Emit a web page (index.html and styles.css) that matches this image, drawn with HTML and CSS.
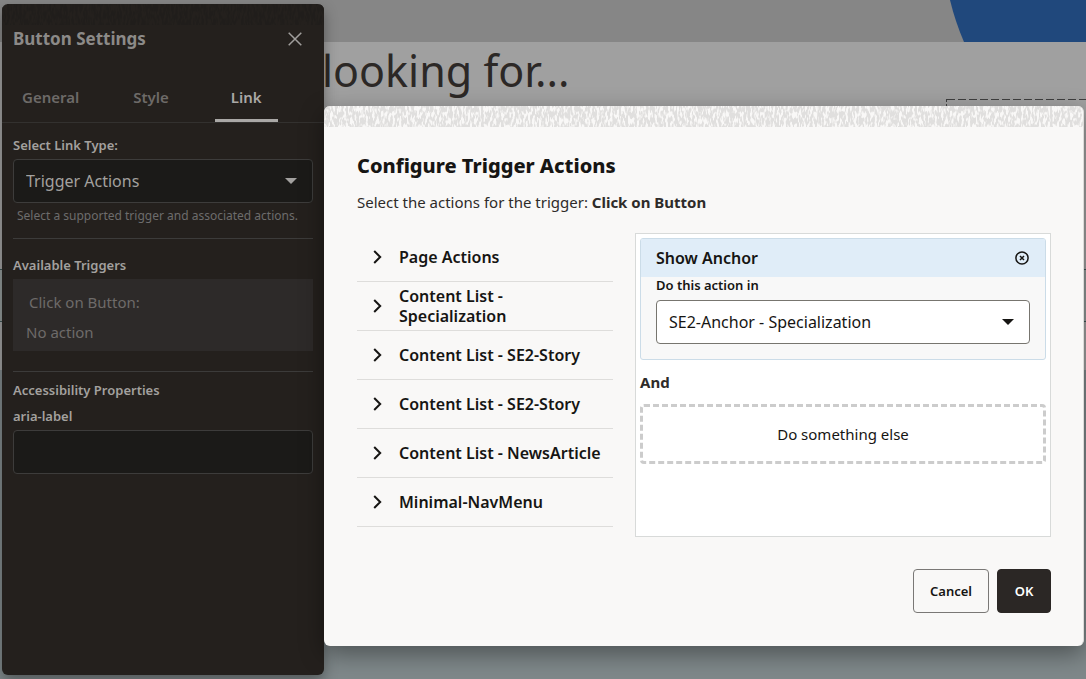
FILE: index.html
```html
<!DOCTYPE html>
<html lang="en">
<head>
<meta charset="utf-8">
<title>Button Settings</title>
<meta name="viewport" content="width=device-width, initial-scale=1">
<link rel="stylesheet" href="styles.css">
</head>
<body>
<div class="site">
  <div class="hero">
    <svg class="hero-shape" viewBox="0 0 136 42" preserveAspectRatio="none" aria-hidden="true"><path d="M0 0Q5 21 14 42H136V0Z"/></svg>
  </div>
  <div class="intro">
    <h1 class="headline">looking for...</h1>
    <div class="drop-zone"></div>
  </div>
  <div class="row"></div>
  <div class="gap"></div>
  <div class="footer"></div>
</div>

<main class="overlay">
  <section class="panel" aria-labelledby="panel-title">
    <svg class="grain" aria-hidden="true">
      <filter id="grain-dark" x="0" y="0" width="100%" height="100%" color-interpolation-filters="sRGB">
        <feTurbulence type="fractalNoise" baseFrequency="0.5 0.13" numOctaves="2" seed="4"/>
        <feColorMatrix values="0 0 0 0 0.125  0 0 0 0 0.115  0 0 0 0 0.105  5 0 0 0 -1.9"/>
      </filter>
      <rect width="100%" height="100%" filter="url(#grain-dark)"/>
    </svg>
    <header class="panel-head">
      <h2 class="panel-title" id="panel-title">Button Settings</h2>
      <button class="close" type="button" aria-label="Close">
        <svg width="14" height="14" viewBox="0 0 14 14"><path d="M.7.7l12.6 12.6M13.3.7L.7 13.3"/></svg>
      </button>
    </header>
    <nav class="tabs">
      <button class="tab" type="button">General</button>
      <button class="tab" type="button">Style</button>
      <button class="tab tab-active" type="button">Link</button>
    </nav>
    <div class="panel-body">
      <div class="group">
        <label class="label" for="link-type">Select Link Type:</label>
        <div class="select-wrap">
          <select class="select select-dark" id="link-type"><option>Trigger Actions</option></select>
          <svg class="caret" width="12" height="6" viewBox="0 0 12 6" aria-hidden="true"><path d="M0 0h12L6 6z"/></svg>
        </div>
        <p class="hint">Select a supported trigger and associated actions.</p>
      </div>
      <div class="group group-triggers">
        <h3 class="label">Available Triggers</h3>
        <div class="trigger">
          <span class="trigger-name">Click on Button:</span>
          <span class="trigger-value">No action</span>
        </div>
      </div>
      <div class="group group-access">
        <h3 class="label">Accessibility Properties</h3>
        <label class="label label-field" for="aria">aria-label</label>
        <input class="text-input" id="aria" type="text">
      </div>
    </div>
  </section>

  <section class="dialog" role="dialog" aria-labelledby="dialog-title">
    <svg class="grain" aria-hidden="true">
      <filter id="grain-light" x="0" y="0" width="100%" height="100%" color-interpolation-filters="sRGB">
        <feTurbulence type="fractalNoise" baseFrequency="0.45 0.16" numOctaves="2" seed="9"/>
        <feColorMatrix values="0 0 0 0 0.88  0 0 0 0 0.875  0 0 0 0 0.87  6 0 0 0 -2.3"/>
      </filter>
      <rect width="100%" height="100%" filter="url(#grain-light)"/>
    </svg>
    <div class="dialog-body">
      <h2 class="dialog-title" id="dialog-title">Configure Trigger Actions</h2>
      <p class="dialog-text">Select the actions for the trigger: <strong>Click on Button</strong></p>
      <div class="columns">
        <ul class="actions">
          <li><button class="action" type="button"><svg class="chevron" viewBox="0 0 9 14"><path d="M1.2 1l6 6-6 6"/></svg><span>Page Actions</span></button></li>
          <li><button class="action" type="button"><svg class="chevron" viewBox="0 0 9 14"><path d="M1.2 1l6 6-6 6"/></svg><span>Content List - Specialization</span></button></li>
          <li><button class="action" type="button"><svg class="chevron" viewBox="0 0 9 14"><path d="M1.2 1l6 6-6 6"/></svg><span>Content List - SE2-Story</span></button></li>
          <li><button class="action" type="button"><svg class="chevron" viewBox="0 0 9 14"><path d="M1.2 1l6 6-6 6"/></svg><span>Content List - SE2-Story</span></button></li>
          <li><button class="action" type="button"><svg class="chevron" viewBox="0 0 9 14"><path d="M1.2 1l6 6-6 6"/></svg><span>Content List - NewsArticle</span></button></li>
          <li><button class="action" type="button"><svg class="chevron" viewBox="0 0 9 14"><path d="M1.2 1l6 6-6 6"/></svg><span>Minimal-NavMenu</span></button></li>
        </ul>
        <div class="flow">
          <div class="card">
            <div class="card-head">
              <h3 class="card-title">Show Anchor</h3>
              <button class="remove" type="button" aria-label="Remove action">
                <svg width="14" height="14" viewBox="0 0 14 14"><circle cx="7" cy="7" r="6.1"/><path d="M5 5l4 4M9 5L5 9"/></svg>
              </button>
            </div>
            <div class="card-body">
              <label class="card-label" for="target">Do this action in</label>
              <div class="select-wrap">
                <select class="select select-light" id="target"><option>SE2-Anchor - Specialization</option></select>
                <svg class="caret" width="12" height="6" viewBox="0 0 12 6" aria-hidden="true"><path d="M0 0h12L6 6z"/></svg>
              </div>
            </div>
          </div>
          <p class="and">And</p>
          <button class="add" type="button">Do something else</button>
        </div>
      </div>
      <div class="buttons">
        <button class="btn" type="button">Cancel</button>
        <button class="btn btn-primary" type="button">OK</button>
      </div>
    </div>
  </section>
</main>
</body>
</html>
```
FILE: styles.css
```css
* { box-sizing: border-box; }
body {
  margin: 0;
  min-height: 100vh;
  display: grid;
  font: 15px/20px "Noto Sans", "Open Sans", sans-serif;
  color: #161513;
  overflow: hidden;
}
h1, h2, h3, p, ul { margin: 0; padding: 0; }
ul { list-style: none; }
button, input, select { font: inherit; color: inherit; }
button { background: none; border: 0; padding: 0; }
svg { display: block; }

.site, .overlay { grid-area: 1 / 1; min-width: 0; }
.site { display: flex; flex-direction: column; background: #a0a0a0; }
.hero { height: 42px; background: #868686; display: flex; justify-content: flex-end; }
.hero-shape { width: 136px; height: 42px; fill: #20487c; }
.intro { height: 227px; display: flex; justify-content: space-between; }
.headline {
  padding-left: 322px;
  font-size: 43px;
  line-height: 58px;
  font-weight: 400;
  color: #2c2826;
}
.drop-zone {
  width: 140px;
  margin-top: 57px;
  border-left: 1px dashed #3f3f3f;
  background: repeating-linear-gradient(90deg, #3f3f3f 0 8px, transparent 8px 11px) 0 0 / 100% 1px no-repeat;
}
.row { height: 53px; border: 1px solid #3c5454; border-width: 1px 0; background: #919897; }
.gap { height: 48px; }
.footer { flex: 1; background: #7f888a; }

.overlay {
  position: relative;
  display: grid;
  grid-template-columns: 322px minmax(0, 1fr);
  padding: 4px 2px;
}
.panel {
  border-radius: 6px;
  background: #24201d;
  color: #a3a19f;
  box-shadow: 0 6px 14px rgba(0, 0, 0, .35);
  overflow: hidden;
}
.overlay > section { display: grid; align-content: start; }
.grain { width: 100%; height: 21px; grid-area: 1 / 1; }
.panel-head {
  grid-area: 1 / 1;
  display: flex;
  justify-content: space-between;
  align-items: center;
  padding: 21px 22px 0 11px;
}
.panel-title { font-size: 17px; line-height: 28px; font-weight: 700; color: #8c8a88; }
.close svg { fill: none; stroke: #a09e9c; stroke-width: 1.5; }
.tabs { display: flex; gap: 22px; padding: 21px 0 0 4px; border-bottom: 1px solid #33312f; }
.tab {
  height: 48px;
  padding: 0 16px;
  border-bottom: 3px solid transparent;
  font-size: 15px;
  font-weight: 600;
  color: #6d6a68;
}
.tab-active { margin-left: 8px; color: #aaa8a6; border-color: #aaa8a6; }
.panel-body { padding: 12px 11px; }
.group { border-bottom: 1px solid #3c3b3a; }
.group:last-child { border: 0; }
.label { display: block; font-size: 13px; line-height: 20px; font-weight: 600; }
.select-wrap { display: grid; align-items: center; }
.select, .caret { grid-area: 1 / 1; }
.caret { justify-self: end; margin-right: 16px; pointer-events: none; fill: currentColor; }
.select {
  appearance: none;
  width: 100%;
  height: 44px;
  padding: 0 12px;
  border: 1px solid #3d3c3b;
  border-radius: 4px;
  font-size: 16px;
}
.select-dark { margin-top: 4px; background: #1b1a18; }
.select-wrap .select-dark + .caret { margin-top: 4px; }
.hint { padding: 3px 4px 12px; font-size: 12px; line-height: 20px; color: #6d6c6c; }
.group-triggers { padding: 16px 0 20px; }
.trigger { display: grid; gap: 10px; margin-top: 4px; padding: 13px 13px 9px; background: #2d2a29; color: #6e6b69; }
.trigger-name { padding-left: 3px; }
.group-access { padding-top: 8px; }
.label-field { margin-top: 6px; }
.text-input {
  display: block;
  width: 100%;
  height: 44px;
  margin-top: 4px;
  padding: 0 12px;
  border: 1px solid #3d3c3b;
  border-radius: 4px;
  background: #1b1a18;
}

.dialog {
  align-self: start;
  margin-top: 102px;
  border-radius: 6px;
  border-right: 1px solid #dcdbd9;
  background: #f9f8f7;
  box-shadow: 0 8px 24px rgba(0, 0, 0, .4);
  overflow: hidden;
}
.dialog-body { display: flex; flex-direction: column; padding: 26px 32px 33px 33px; }
.dialog-title { font-size: 20px; line-height: 26px; font-weight: 800; }
.dialog-text { margin-top: 11px; font-size: 15px; line-height: 24px; color: #2e2b29; }
.columns { display: grid; grid-template-columns: 256px minmax(0, 1fr); gap: 22px; margin-top: 19px; }
.action {
  display: flex;
  align-items: center;
  gap: 17px;
  width: 100%;
  height: 49px;
  padding: 0 8px 0 16px;
  border-bottom: 1px solid #dedddb;
  font-size: 16px;
  font-weight: 600;
  text-align: left;
}
.chevron { flex: none; width: 9px; height: 14px; fill: none; stroke: #161513; stroke-width: 2; }
.flow { border: 1px solid #d8dad9; background: #fff; padding: 4px; min-height: 304px; }
.card { border: 1px solid #cbdce8; border-radius: 3px; background: #f8f8f8; overflow: hidden; }
.card-head { display: flex; justify-content: space-between; align-items: center; height: 38px; padding: 0 16px 0 15px; background: #e0edf8; }
.card-title { font-size: 16px; line-height: 20px; font-weight: 600; }
.remove svg { fill: none; stroke: #161513; stroke-width: 1.5; }
.card-body { padding: 0 15px 15px; }
.card-label { display: block; font-size: 13px; line-height: 16px; font-weight: 600; }
.select-light { margin-top: 7px; border-color: #77756f; background: #fff; }
.select-wrap .select-light + .caret { margin-top: 7px; }
.and { margin-top: 10px; font-size: 15px; line-height: 24px; font-weight: 700; color: #2e2b29; }
.add { display: block; width: 100%; height: 60px; margin-top: 10px; border: 3px dashed #cccccc; border-radius: 4px; font-size: 15px; }
.buttons { display: flex; justify-content: flex-end; gap: 8px; margin-top: 32px; }
.btn { min-width: 54px; height: 44px; padding: 0 16px; border: 1px solid #7a7876; border-radius: 4px; font-size: 13px; font-weight: 600; }
.btn-primary { border-color: #2b2725; background: #2b2725; color: #fff; }
```
